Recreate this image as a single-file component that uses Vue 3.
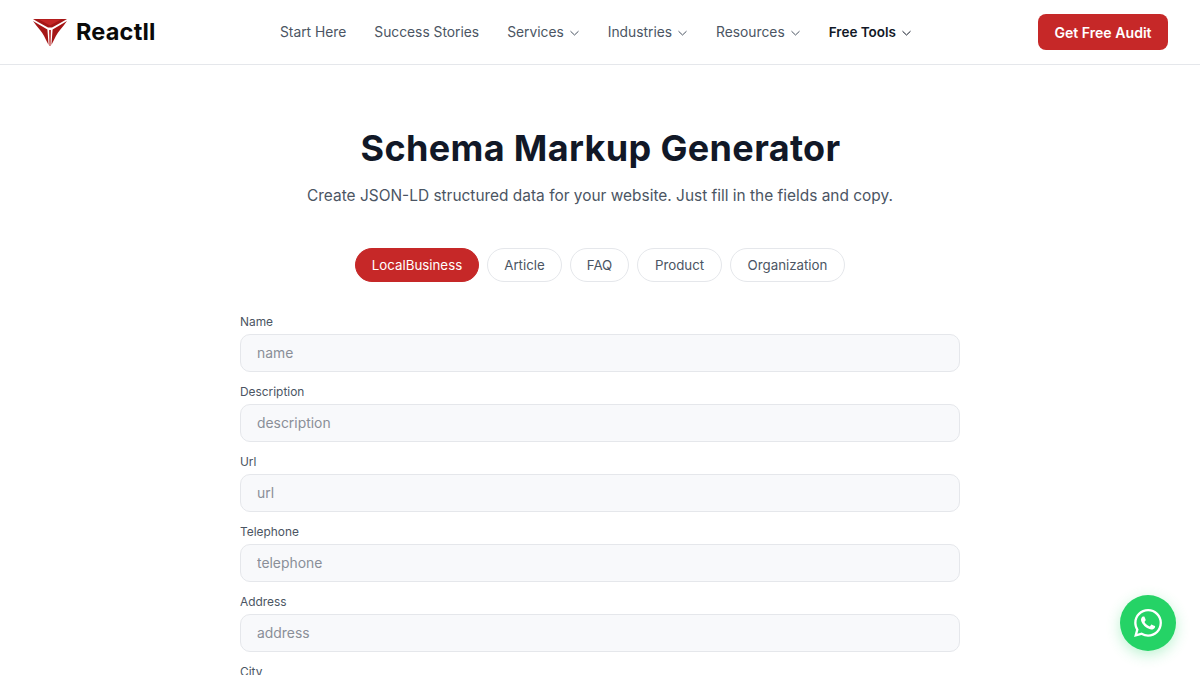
<script setup>
const links = [
  { label: 'Start Here' },
  { label: 'Success Stories' },
  { label: 'Services', caret: true },
  { label: 'Industries', caret: true },
  { label: 'Resources', caret: true },
  { label: 'Free Tools', caret: true, active: true },
]
const tabs = [
  { label: 'LocalBusiness', width: 124 },
  { label: 'Article', width: 75 },
  { label: 'FAQ', width: 59 },
  { label: 'Product', width: 85 },
  { label: 'Organization', width: 115 },
]
const fields = ['Name', 'Description', 'Url', 'Telephone', 'Address', 'City']
</script>

<template>
  <div class="page">
    <header class="nav">
      <a class="logo">
        <svg width="36" height="30" viewBox="0 0 36 30">
          <path d="M1 2 L35 2 L30 5 L20 10.5 L16 10.5 L6 5 Z" fill="#a51616" />
          <path d="M7 2.6 L29 2.6 L18 8.6 Z" fill="#c42626" />
          <path d="M1 4 L15.4 12.6 L16.6 28 C13 21 11 16 8 13 C5.5 10 3 7 1 4 Z" fill="#a51616" />
          <path d="M35 4 L20.6 12.6 L19.4 28 C23 21 25 16 28 13 C30.5 10 33 7 35 4 Z" fill="#a51616" />
          <path d="M17.1 13 L18.9 13 L18.5 29 L17.5 29 Z" fill="#b81e1e" />
        </svg>
        <span class="logo-text">Reactll</span>
      </a>
      <nav class="links">
        <a v-for="l in links" :key="l.label" class="link" :class="{ active: l.active }">
          {{ l.label }}
          <svg v-if="l.caret" class="caret" width="11" height="10" viewBox="0 0 10 10">
            <path d="M1 3.2 L5 7 L9 3.2" fill="none" stroke="currentColor" stroke-width="1" />
          </svg>
        </a>
      </nav>
      <a class="cta">Get Free Audit</a>
    </header>

    <main class="main">
      <h1 class="title">Schema Markup Generator</h1>
      <p class="sub">Create JSON-LD structured data for your website. Just fill in the fields and copy.</p>
      <div class="tabs">
        <button
          v-for="(t, i) in tabs"
          :key="t.label"
          class="tab"
          :class="{ on: i === 0 }"
          :style="{ width: t.width + 'px' }"
        >{{ t.label }}</button>
      </div>
      <form class="form">
        <div v-for="f in fields" :key="f" class="field">
          <label class="label">{{ f }}</label>
          <input class="input" :placeholder="f.toLowerCase()" />
        </div>
      </form>
    </main>

    <a class="wa">
      <svg width="28" height="28" viewBox="0 0 24 24" fill="#fff">
        <path d="M17.472 14.382c-.297-.149-1.758-.867-2.03-.967-.273-.099-.471-.148-.67.15-.197.297-.767.966-.94 1.164-.173.199-.347.223-.644.075-.297-.15-1.255-.463-2.39-1.475-.883-.788-1.48-1.761-1.653-2.059-.173-.297-.018-.458.13-.606.134-.133.298-.347.446-.52.149-.174.198-.298.298-.497.099-.198.05-.371-.025-.52-.075-.149-.669-1.612-.916-2.207-.242-.579-.487-.5-.669-.51-.173-.008-.371-.01-.57-.01-.198 0-.52.074-.792.372-.272.297-1.04 1.016-1.04 2.479 0 1.462 1.065 2.875 1.213 3.074.149.198 2.096 3.2 5.077 4.487.709.306 1.262.489 1.694.625.712.227 1.36.195 1.871.118.571-.085 1.758-.719 2.006-1.413.248-.694.248-1.289.173-1.413-.074-.124-.272-.198-.57-.347m-5.421 7.403h-.004a9.87 9.87 0 01-5.031-1.378l-.361-.214-3.741.982.998-3.648-.235-.374a9.86 9.86 0 01-1.51-5.26c.001-5.45 4.436-9.884 9.888-9.884 2.64 0 5.122 1.03 6.988 2.898a9.825 9.825 0 012.893 6.994c-.003 5.45-4.437 9.884-9.885 9.884m8.413-18.297A11.815 11.815 0 0012.05 0C5.495 0 .16 5.335.157 11.892c0 2.096.547 4.142 1.588 5.945L.057 24l6.305-1.654a11.882 11.882 0 005.683 1.448h.005c6.554 0 11.89-5.335 11.893-11.893a11.821 11.821 0 00-3.48-8.413z" />
      </svg>
    </a>
  </div>
</template>

<style>
html, body { margin: 0; background: #fff; overflow: hidden; }
</style>

<style scoped>
.page {
  height: 675px;
  overflow: hidden;
  font-family: Inter, "Liberation Sans", sans-serif;
  color: #111827;
  background: #fff;
}
.nav {
  height: 64px;
  border-bottom: 1px solid #e5e7eb;
  display: flex;
  align-items: center;
  justify-content: space-between;
  padding: 0 32px;
}
.logo { display: flex; align-items: center; gap: 8px; width: 124px; height: 30px; }
.logo-text {
  font-size: 23.5px;
  font-weight: 700;
  color: #0a0a0a;
  line-height: 1;
  font-family: Inter, sans-serif;
  letter-spacing: 0.2px;
}
.links { display: flex; align-items: center; gap: 28px; margin-right: 2px; }
.link {
  display: flex;
  align-items: center;
  gap: 5px;
  font-size: 13.8px;
  font-weight: 400;
  color: #4b5563;
  white-space: nowrap;
}
.link.active { color: #111827; font-weight: 600; font-size: 13.5px; }
.caret { margin-top: 1px; }
.cta {
  width: 130px;
  height: 36px;
  display: flex;
  align-items: center;
  justify-content: center;
  background: #c62828;
  border-radius: 8px;
  color: #fff;
  font-size: 14.1px;
  font-weight: 600;
}
.main {
  width: 720px;
  margin: 0 auto;
  padding-top: 60px;
  display: flex;
  flex-direction: column;
  align-items: center;
}
.title {
  margin: 0;
  padding-left: 1px;
  font-size: 36px;
  line-height: 46px;
  font-weight: 700;
  letter-spacing: 0.35px;
  color: #111827;
  white-space: nowrap;
}
.sub {
  margin: 13px 0 0;
  font-size: 15.45px;
  line-height: 24px;
  color: #4b5563;
  white-space: nowrap;
}
.tabs { display: flex; gap: 8px; margin-top: 40px; }
.tab {
  height: 34px;
  padding: 0;
  border: 1px solid #e5e7eb;
  border-radius: 17px;
  background: #fff;
  font: 400 13.3px Inter, sans-serif;
  color: #4b5563;
}
.tab.on { background: #c62828; border-color: #c62828; color: #fff; }
.form { width: 100%; margin-top: 32px; display: flex; flex-direction: column; gap: 12px; }
.field { display: flex; flex-direction: column; gap: 4px; }
.label { font-size: 11.9px; line-height: 16px; font-weight: 400; color: #4b5563; }
.input {
  box-sizing: border-box;
  width: 100%;
  height: 38px;
  padding: 0 16px;
  background: #f8f9fb;
  border: 1px solid #e5e7eb;
  border-radius: 10px;
  font: 400 13.9px Inter, sans-serif;
  outline: none;
}
.input::placeholder { color: #8a8f98; opacity: 1; }
.wa {
  position: fixed;
  right: 24px;
  bottom: 24px;
  width: 56px;
  height: 56px;
  border-radius: 50%;
  background: #25d366;
  box-shadow: 0 4px 14px rgba(37, 211, 102, 0.3);
  display: flex;
  align-items: center;
  justify-content: center;
}
</style>
